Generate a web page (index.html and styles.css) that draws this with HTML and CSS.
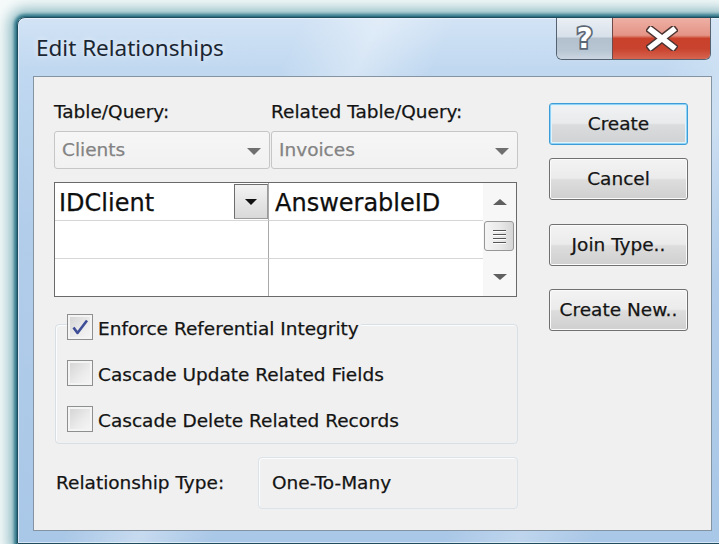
FILE: index.html
```html
<!DOCTYPE html>
<html lang="en">
<head>
<meta charset="utf-8">
<title>Edit Relationships</title>
<link rel="stylesheet" href="styles.css">
</head>
<body>
<div class="window">
  <div class="titlebar">
    <span class="title">Edit Relationships</span>
    <div class="caps">
      <div class="cap help">
        <span class="qmark">?</span>
      </div>
      <div class="cap close">
        <svg width="32" height="25" viewBox="0 0 32 25">
          <path d="M5 4 L27 21 M27 4 L5 21" stroke="#4c3532" stroke-width="8.5" stroke-linecap="square" fill="none"/>
          <path d="M5 4 L27 21 M27 4 L5 21" stroke="#ffffff" stroke-width="5.5" stroke-linecap="square" fill="none"/>
        </svg>
      </div>
    </div>
  </div>

  <div class="client">
    <div class="main">
      <div class="pickers">
        <span class="lbl">Table/Query:</span>
        <span class="lbl">Related Table/Query:</span>
        <div class="combo"><span>Clients</span><i class="tri"></i></div>
        <div class="combo"><span>Invoices</span><i class="tri"></i></div>
      </div>

      <div class="fields">
        <div class="cells">
          <div class="cell left first"><span class="val">IDClient</span><span class="drop"><i class="tri-sm"></i></span></div>
          <div class="cell first"><span class="val val-r">AnswerableID</span></div>
          <div class="cell left"></div>
          <div class="cell"></div>
          <div class="cell left last"></div>
          <div class="cell last"></div>
        </div>
        <div class="scroll">
          <div class="sarrow"><i class="up"></i></div>
          <div class="thumb"><b></b><b></b><b></b><b></b></div>
          <div class="sfill"></div>
          <div class="sarrow"><i class="down"></i></div>
        </div>
      </div>

      <div class="options">
        <label class="check legend">
          <span class="box"><svg width="24" height="24" viewBox="0 0 24 24"><path d="M5.5 12.5 L9.5 18 L19 5.5" stroke="#3d4d96" stroke-width="2.6" fill="none" stroke-linejoin="round"/></svg></span>
          <span class="txt">Enforce Referential Integrity</span>
        </label>
        <label class="check">
          <span class="box"></span>
          <span class="txt">Cascade Update Related Fields</span>
        </label>
        <label class="check">
          <span class="box"></span>
          <span class="txt">Cascade Delete Related Records</span>
        </label>
      </div>

      <div class="reltype">
        <span class="rlabel">Relationship Type:</span>
        <div class="relbox">One-To-Many</div>
      </div>
    </div>

    <div class="actions">
      <button class="btn default">Create</button>
      <button class="btn cancel">Cancel</button>
      <button class="btn join">Join Type..</button>
      <button class="btn newrel">Create New..</button>
    </div>
  </div>
</div>
</body>
</html>
```

FILE: styles.css
```css
html, body {
  margin: 0;
  width: 719px;
  height: 544px;
  overflow: hidden;
}

body {
  background: #f6fafa;
  padding: 17px 0 0 17px;
  box-sizing: border-box;
  font-family: "DejaVu Sans", sans-serif;
  font-size: 18.5px;
  color: #141414;
  -webkit-text-stroke: 0.25px currentColor;
}

/* window frame with aero glass and teal glow */
.window {
  width: 711px;
  height: 527px;
  box-sizing: border-box;
  border: 1px solid #1f4d5e;
  border-radius: 8px 8px 0 0;
  background:
    linear-gradient(115deg, rgba(255,255,255,0) 30%, rgba(255,255,255,0.35) 38%, rgba(255,255,255,0) 46%, rgba(255,255,255,0) 70%, rgba(255,255,255,0.25) 78%, rgba(255,255,255,0) 86%),
    linear-gradient(180deg, #d2e3f5 0%, #c0d8f0 10%, #b2cdea 40%, #a9c7e7 100%);
  box-shadow:
    0 0 0 1px #2d6f80,
    0 0 3px 3px rgba(45, 118, 136, 0.9),
    0 0 14px 8px rgba(62, 138, 154, 0.6),
    inset 0 0 0 1px rgba(235, 244, 252, 0.7);
  display: flex;
  flex-direction: column;
}

.titlebar {
  height: 58px;
  display: flex;
  align-items: flex-start;
  flex-shrink: 0;
}

.title {
  font-family: "Noto Sans", sans-serif;
  font-size: 22.5px;
  line-height: 30px;
  color: #1b2633;
  margin: 15px 0 0 18px;
  -webkit-text-stroke: 0;
  text-shadow: 0 0 6px rgba(255,255,255,0.8);
}

.caps {
  display: flex;
  margin-left: auto;
  margin-right: 16px;
  height: 41px;
  border: 1px solid #56626f;
  border-top: none;
  border-radius: 0 0 6px 6px;
  overflow: hidden;
}

.cap {
  display: flex;
  align-items: center;
  justify-content: center;
}

.help {
  width: 55px;
  background: linear-gradient(180deg, #eaeff4 0%, #d8e0e9 45%, #b3c1cf 50%, #b8c6d3 80%, #cbd6e1 100%);
  border-right: 1px solid #6e4a48;
}

.qmark {
  font-family: "DejaVu Sans", sans-serif;
  font-weight: bold;
  font-size: 28px;
  line-height: 30px;
  color: #ffffff;
  -webkit-text-stroke: 3.5px #5d6774;
  paint-order: stroke fill;
  margin-top: 1px;
}

.close {
  width: 97px;
  background: linear-gradient(180deg, #eeb0a5 0%, #e49486 42%, #c9412b 50%, #c8432e 75%, #d76550 100%);
}

/* client area */
.client {
  margin: 0 15px;
  height: 455px;
  box-sizing: border-box;
  border: 1px solid #8594a3;
  background: #f0f0f0;
  display: flex;
  padding: 24px 0 0 20px;
}

.main {
  width: 464px;
  display: flex;
  flex-direction: column;
}

.pickers {
  display: grid;
  grid-template-columns: 216px 247px;
  column-gap: 1px;
  row-gap: 8px;
}

.lbl {
  line-height: 22px;
}

.combo {
  height: 38px;
  box-sizing: border-box;
  border: 1px solid #c6c6c6;
  border-radius: 3px;
  background: linear-gradient(180deg, #f6f6f6, #f1f1f1);
  display: flex;
  align-items: center;
  padding: 0 8px 0 7px;
  color: #838383;
  line-height: 22px;
}

.combo span {
  flex: 1;
}

.tri {
  width: 0;
  height: 0;
  border-left: 7px solid transparent;
  border-right: 7px solid transparent;
  border-top: 7px solid #6f6f6f;
  margin-top: 2px;
}

/* field grid */
.fields {
  margin-top: 13px;
  width: 463px;
  height: 115px;
  box-sizing: border-box;
  border: 1px solid #6a6a6a;
  background: #ffffff;
  display: flex;
}

.cells {
  width: 428px;
  display: grid;
  grid-template-columns: 214px 214px;
  grid-template-rows: 38px 38px 37px;
}

.cell {
  box-sizing: border-box;
  border-bottom: 1px solid #d6d6d6;
  display: flex;
  font-size: 24px;
  line-height: 28px;
  color: #0e0e0e;
}

.cell.last {
  border-bottom: none;
}

.cell.left {
  border-right: 1px solid #a9a9a9;
}

.val {
  padding: 6px 0 0 4px;
  flex: 1;
}

.val-r {
  padding-left: 6px;
}

.drop {
  width: 34px;
  height: 35px;
  margin-top: 1px;
  box-sizing: border-box;
  border: 1px solid #6d6d6d;
  border-right-color: #9a9a9a;
  border-bottom-color: #9a9a9a;
  background: linear-gradient(180deg, #f3f3f3 0%, #e6e6e6 50%, #d9d9d9 100%);
  display: flex;
  align-items: center;
  justify-content: center;
}

.tri-sm {
  width: 0;
  height: 0;
  border-left: 6px solid transparent;
  border-right: 6px solid transparent;
  border-top: 6px solid #111111;
}

.scroll {
  flex: 1;
  background: #f7f7f7;
  display: flex;
  flex-direction: column;
}

.sarrow {
  height: 38px;
  display: flex;
  align-items: center;
  justify-content: center;
  flex-shrink: 0;
}

.sarrow i {
  width: 0;
  height: 0;
  border-left: 7px solid transparent;
  border-right: 7px solid transparent;
}

.sarrow .up {
  border-bottom: 6px solid #5f5f5f;
}

.sarrow .down {
  border-top: 6px solid #5f5f5f;
}

.thumb {
  height: 30px;
  width: 30px;
  margin-left: 1px;
  box-sizing: border-box;
  border: 1px solid #979797;
  border-radius: 3px;
  background: linear-gradient(90deg, #f5f5f5 0%, #e8e8e8 55%, #d6d6d6 100%);
  display: flex;
  flex-direction: column;
  justify-content: center;
  align-items: center;
  gap: 3px;
}

.thumb b {
  display: block;
  width: 13px;
  height: 1px;
  background: #555555;
  box-shadow: 0 1px 0 #ffffff;
}

.sfill {
  flex: 1;
}

/* checkbox group */
.options {
  margin-top: 27px;
  margin-left: 1px;
  height: 120px;
  box-sizing: border-box;
  border: 1px solid #d8dfe5;
  border-radius: 4px;
  box-shadow: inset 1px 1px 0 #fafcfd;
  padding: 0 0 0 11px;
  display: flex;
  flex-direction: column;
  align-items: flex-start;
  gap: 20px;
}

.check {
  display: flex;
  align-items: flex-end;
  gap: 5px;
  height: 26px;
}

.legend {
  margin-top: -11px;
  background: #f0f0f0;
  padding-right: 2px;
}

.box {
  width: 26px;
  height: 26px;
  box-sizing: border-box;
  border: 1px solid #8e8f8f;
  background:
    linear-gradient(135deg, #d2d2d2 0%, #ececec 60%, #f6f6f6 100%) padding-box;
  box-shadow: inset 0 0 0 2px #f4f4f4;
  display: flex;
  align-items: center;
  justify-content: center;
}

.txt {
  line-height: 22px;
}

/* relationship type */
.reltype {
  margin-top: 13px;
  display: flex;
  align-items: center;
}

.rlabel {
  width: 202px;
  padding-left: 2px;
  line-height: 22px;
}

.relbox {
  width: 260px;
  height: 52px;
  box-sizing: border-box;
  border: 1px solid #dbe2e8;
  border-radius: 4px;
  box-shadow: inset 1px 1px 0 #fafcfd;
  padding-left: 13px;
  display: flex;
  align-items: center;
  line-height: 22px;
}

/* command buttons */
.actions {
  margin: 2px 0 0 31px;
  width: 139px;
  display: flex;
  flex-direction: column;
}

.btn {
  height: 42px;
  width: 139px;
  box-sizing: border-box;
  border: 1px solid #707070;
  border-radius: 3px;
  background: linear-gradient(180deg, #f3f3f3 0%, #ebebeb 48%, #dddddd 52%, #cfcfcf 100%);
  box-shadow: inset 0 0 0 1px #fbfbfb;
  font-family: "DejaVu Sans", sans-serif;
  font-size: 18.5px;
  line-height: 22px;
  color: #151515;
  -webkit-text-stroke: 0.25px currentColor;
  padding: 0;
}

.btn.default {
  border-color: #3c9cd8;
  box-shadow: inset 0 0 0 1px #8fd2f4, inset 0 0 0 2px #e2f3fc;
  background: linear-gradient(180deg, #f1f2f3 0%, #e9eaeb 48%, #dadcdd 52%, #cfd1d2 100%);
}

.btn.cancel {
  margin-top: 13px;
}

.btn.join {
  margin-top: 24px;
}

.btn.newrel {
  margin-top: 23px;
}
```
